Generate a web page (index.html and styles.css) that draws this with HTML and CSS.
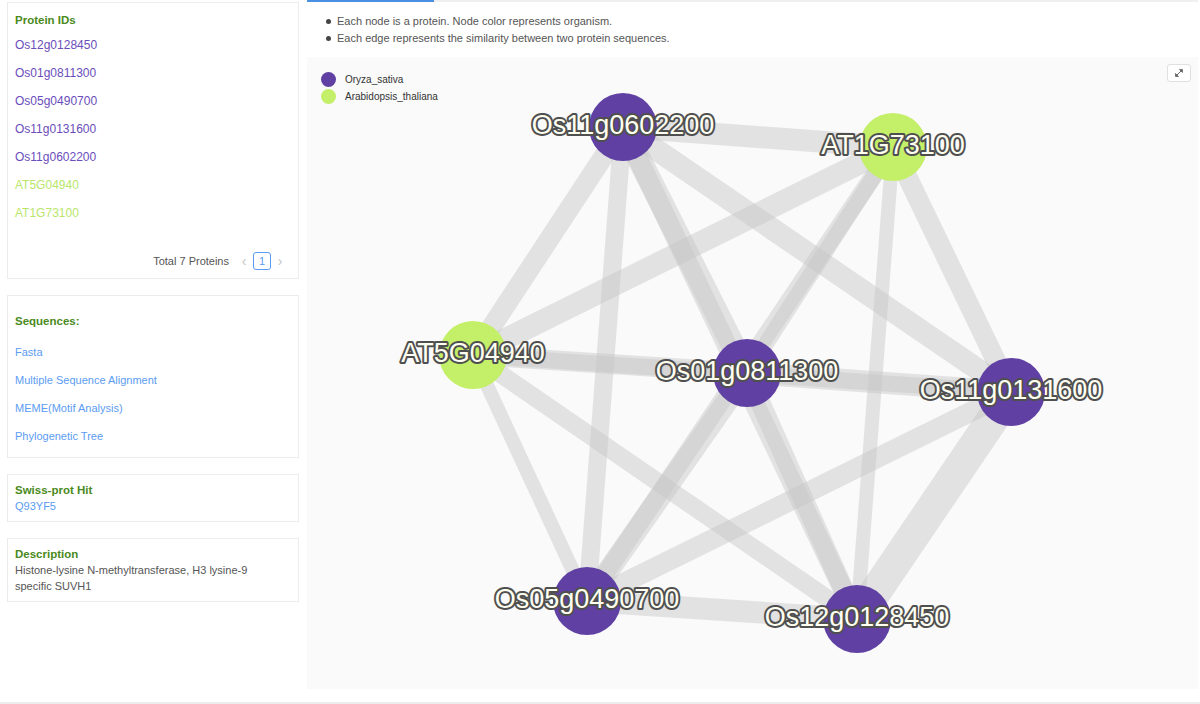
FILE: index.html
```html
<!DOCTYPE html>
<html lang="en">
<head>
    <meta charset="UTF-8">
    <title>Protein Network</title>
    <link rel="stylesheet" href="styles.css">
</head>
<body>
    <div class="main">
        <div class="sidebar">
            <div class="card card-ids">
                <div class="card-title">Protein IDs</div>
                <ul class="id-list">
                    <li class="osa">Os12g0128450</li>
                    <li class="osa">Os01g0811300</li>
                    <li class="osa">Os05g0490700</li>
                    <li class="osa">Os11g0131600</li>
                    <li class="osa">Os11g0602200</li>
                    <li class="ath">AT5G04940</li>
                    <li class="ath">AT1G73100</li>
                </ul>
                <div class="pager">
                    <span class="total">Total 7 Proteins</span>
                    <span class="arrow">&lsaquo;</span>
                    <span class="page">1</span>
                    <span class="arrow">&rsaquo;</span>
                </div>
            </div>

            <div class="card card-seq">
                <div class="card-title">Sequences:</div>
                <ul class="link-list">
                    <li><a href="#">Fasta</a></li>
                    <li><a href="#">Multiple Sequence Alignment</a></li>
                    <li><a href="#">MEME(Motif Analysis)</a></li>
                    <li><a href="#">Phylogenetic Tree</a></li>
                </ul>
            </div>

            <div class="card card-small">
                <div class="card-title">Swiss-prot Hit</div>
                <a href="#">Q93YF5</a>
            </div>

            <div class="card card-small">
                <div class="card-title">Description</div>
                <div class="desc">Histone-lysine N-methyltransferase, H3 lysine-9 specific SUVH1</div>
            </div>
        </div>

        <div class="content">
            <div class="tab-bar"><div class="tab-ink"></div></div>
            <ul class="notes">
                <li>Each node is a protein. Node color represents organism.</li>
                <li>Each edge represents the similarity between two protein sequences.</li>
            </ul>

            <div class="graph">
                <svg class="network" width="891" height="632" viewBox="0 0 891 632">
                    <g class="edges" stroke="#c6c6c6" stroke-opacity="0.46">
                        <line x1="316" y1="70" x2="586" y2="90" stroke-width="22"/>
                        <line x1="316" y1="70" x2="166" y2="298" stroke-width="20"/>
                        <line x1="316" y1="70" x2="440" y2="316" stroke-width="24"/>
                        <line x1="316" y1="70" x2="704" y2="335" stroke-width="22"/>
                        <line x1="316" y1="70" x2="280" y2="544" stroke-width="18"/>
                        <line x1="316" y1="70" x2="550" y2="562" stroke-width="20"/>
                        <line x1="586" y1="90" x2="166" y2="298" stroke-width="22"/>
                        <line x1="586" y1="90" x2="440" y2="316" stroke-width="16"/>
                        <line x1="586" y1="90" x2="704" y2="335" stroke-width="20"/>
                        <line x1="586" y1="90" x2="280" y2="544" stroke-width="18"/>
                        <line x1="586" y1="90" x2="550" y2="562" stroke-width="14"/>
                        <line x1="166" y1="298" x2="440" y2="316" stroke-width="20"/>
                        <line x1="166" y1="298" x2="704" y2="335" stroke-width="16"/>
                        <line x1="166" y1="298" x2="280" y2="544" stroke-width="14"/>
                        <line x1="166" y1="298" x2="550" y2="562" stroke-width="18"/>
                        <line x1="440" y1="316" x2="704" y2="335" stroke-width="22"/>
                        <line x1="440" y1="316" x2="280" y2="544" stroke-width="22"/>
                        <line x1="440" y1="316" x2="550" y2="562" stroke-width="20"/>
                        <line x1="704" y1="335" x2="280" y2="544" stroke-width="20"/>
                        <line x1="704" y1="335" x2="550" y2="562" stroke-width="32"/>
                        <line x1="280" y1="544" x2="550" y2="562" stroke-width="22"/>
                    </g>
                    <g class="nodes">
                        <circle cx="316" cy="70" r="34" fill="#6041a3"/>
                        <circle cx="586" cy="90" r="34" fill="#c4ef68"/>
                        <circle cx="166" cy="298" r="34" fill="#c4ef68"/>
                        <circle cx="440" cy="316" r="34" fill="#6041a3"/>
                        <circle cx="704" cy="335" r="34" fill="#6041a3"/>
                        <circle cx="280" cy="544" r="34" fill="#6041a3"/>
                        <circle cx="550" cy="562" r="34" fill="#6041a3"/>
                    </g>
                    <g class="labels">
                        <text x="316" y="77">Os11g0602200</text>
                        <text x="586" y="97">AT1G73100</text>
                        <text x="166" y="305">AT5G04940</text>
                        <text x="440" y="323">Os01g0811300</text>
                        <text x="704" y="342">Os11g0131600</text>
                        <text x="280" y="551">Os05g0490700</text>
                        <text x="550" y="569">Os12g0128450</text>
                    </g>
                </svg>

                <div class="legend">
                    <div class="legend-item"><span class="dot osa-dot"></span>Oryza_sativa</div>
                    <div class="legend-item"><span class="dot ath-dot"></span>Arabidopsis_thaliana</div>
                </div>

                <button class="expand" title="Fullscreen">
                    <svg width="10" height="10" viewBox="0 0 10 10">
                        <path d="M2 8 L8 2" stroke="#666" stroke-width="1"/>
                        <path d="M5.5 1.5 H8.5 V4.5 Z" fill="#666" stroke="#666" stroke-width="0.8"/>
                        <path d="M1.5 5.5 V8.5 H4.5 Z" fill="#666" stroke="#666" stroke-width="0.8"/>
                    </svg>
                </button>
            </div>
        </div>
    </div>
    <div class="footer"></div>
</body>
</html>
```

FILE: styles.css
```css
body {
    margin: 0;
    font-family: 'Liberation Sans', Arial, sans-serif;
    font-size: 11px;
    color: #555;
    background-color: #fff;
}
ul {
    list-style: none;
    margin: 0;
    padding: 0;
}
a {
    color: #5b9cf2;
    text-decoration: none;
}
.main {
    display: flex;
    height: 702px;
}
.sidebar {
    width: 292px;
    padding: 2px 0 0 7px;
    flex-shrink: 0;
}
.card {
    border: 1px solid #ececec;
    background-color: #fff;
    margin-bottom: 16px;
    padding: 8px 7px;
}
.card-title {
    color: #4a8a20;
    font-weight: bold;
    font-size: 11.5px;
    line-height: 18px;
}
.id-list {
    margin-top: 2px;
}
.id-list li {
    line-height: 28px;
    font-size: 12px;
}
.osa {
    color: #6a4dbb;
}
.ath {
    color: #b9e66a;
}
.pager {
    display: flex;
    justify-content: flex-end;
    align-items: center;
    margin-top: 25px;
    height: 18px;
    padding-right: 5px;
}
.total {
    color: #555;
    margin-right: 9px;
}
.arrow {
    color: #c4c4c4;
    font-size: 14px;
    width: 12px;
    text-align: center;
}
.page {
    width: 16px;
    height: 16px;
    line-height: 16px;
    border: 1px solid #5b9cf2;
    border-radius: 3px;
    color: #5b9cf2;
    text-align: center;
    margin: 0 3px;
}
.card-seq {
    padding: 16px 7px 7px;
}
.link-list {
    margin-top: 8px;
}
.link-list li {
    line-height: 28px;
}
.card-small {
    padding: 7px 7px 7px;
}
.card-small .card-title,
.card-small a,
.desc {
    line-height: 16px;
}
.desc {
    color: #555;
    max-width: 250px;
}
.content {
    flex: 1;
    margin-left: 8px;
    margin-right: 2px;
    display: flex;
    flex-direction: column;
}
.tab-bar {
    height: 2px;
    background-color: #f0f0f0;
}
.tab-ink {
    width: 127px;
    height: 2px;
    background-color: #4a90e2;
}
.notes {
    margin: 11px 0 10px 0;
    padding-left: 30px;
}
.notes li {
    position: relative;
    line-height: 17px;
    color: #555;
}
.notes li::before {
    content: '';
    position: absolute;
    left: -11px;
    top: 6px;
    width: 5px;
    height: 5px;
    border-radius: 50%;
    background-color: #444;
}
.graph {
    position: relative;
    height: 632px;
    background-color: #fafafa;
    overflow: hidden;
}
.network {
    display: block;
}
.labels text {
    font-family: 'Liberation Sans', Arial, sans-serif;
    font-size: 27px;
    text-anchor: middle;
    fill: #fffff2;
    stroke: #4f4f4f;
    stroke-width: 4px;
    paint-order: stroke;
    stroke-linejoin: round;
}
.legend {
    position: absolute;
    left: 14px;
    top: 14px;
}
.legend-item {
    display: flex;
    align-items: center;
    height: 17px;
    color: #333;
    font-size: 10px;
}
.dot {
    width: 15px;
    height: 15px;
    border-radius: 50%;
    margin-right: 9px;
}
.osa-dot {
    background-color: #6041a3;
}
.ath-dot {
    background-color: #c4ef68;
}
.expand {
    position: absolute;
    left: 860px;
    top: 7px;
    width: 24px;
    height: 18px;
    padding: 0;
    border: 1px solid #e0e0e0;
    border-radius: 3px;
    background-color: #fff;
    display: flex;
    align-items: center;
    justify-content: center;
}
.footer {
    height: 2px;
    background-color: #ececec;
}
```
